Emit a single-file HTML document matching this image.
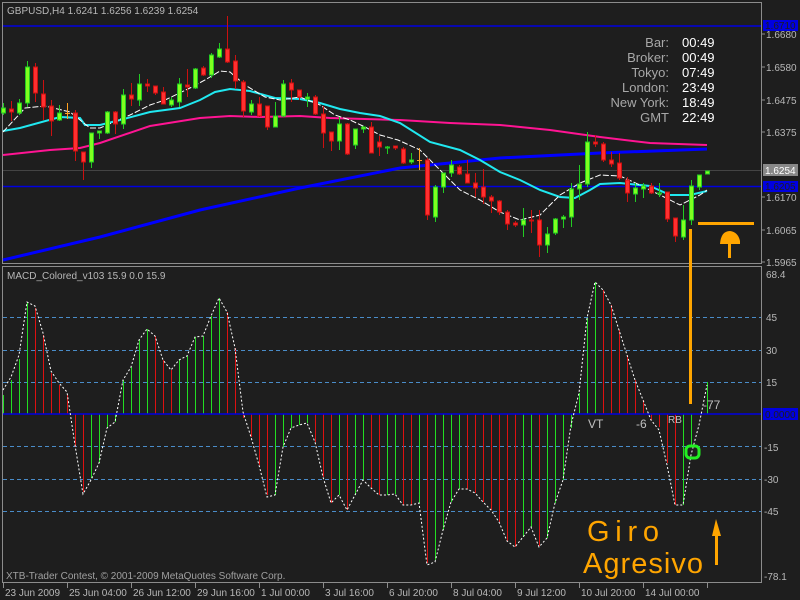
<!DOCTYPE html>
<html><head><meta charset="utf-8"><style>
html,body{margin:0;padding:0;background:#1e1e1e;}
svg{display:block;font-family:"Liberation Sans",sans-serif;}
</style></head><body>
<svg width="800" height="600" viewBox="0 0 800 600" xmlns="http://www.w3.org/2000/svg">
<rect width="800" height="600" fill="#1e1e1e"/>
<!-- frames -->
<g fill="none" stroke="#8c8c8c" stroke-width="1">
<path d="M2.5 2.5H761.5V263.5H2.5Z"/>
<path d="M2.5 266.5H761.5V582.5H2.5Z"/>
</g>
<!-- horizontal lines -->
<line x1="3" y1="26" x2="761" y2="26" stroke="#0000e0" stroke-width="1.5"/>
<line x1="3" y1="186.5" x2="761" y2="186.5" stroke="#0000e0" stroke-width="1.5"/>
<line x1="3" y1="170.5" x2="761" y2="170.5" stroke="#444" stroke-width="1"/>
<!-- blue trend -->
<polyline fill="none" stroke="#0000ff" stroke-width="3" points="3,260 100,237 200,210 300,188 400,168 500,158 600,153 707,149"/>
<!-- magenta MA -->
<polyline fill="none" stroke="#ff1493" stroke-width="2" points="3,155 50,150 80,148 100,143 150,126 200,118 230,116 260,117 300,116 330,118 400,120 450,123 500,125 550,130 600,137 650,143 707,145"/>
<!-- cyan MA -->
<polyline fill="none" stroke="#20e8f0" stroke-width="2" points="3,131 20,128 60,117 80,118 85,125 100,125 120,120 150,112 180,108 200,100 215,92 230,89 250,91 275,98 300,99 320,103 340,109 360,113 380,116 400,123 430,142 460,150 480,160 500,172 520,180 540,190 560,197 575,198 590,190 600,184 620,183 650,186 670,195 690,195 707,191"/>
<!-- white MA -->
<polyline fill="none" stroke="#fff" stroke-width="1" stroke-dasharray="6,2" points="3,132 25,108 45,106 70,112 90,128 100,128 130,115 150,105 165,100 190,88 205,80 220,71 230,72 245,85 265,97 280,100 300,97 320,105 335,115 350,120 365,127 380,135 398,140 420,150 440,170 460,190 480,200 500,212 520,220 540,215 560,195 580,183 600,175 620,176 640,185 660,195 680,205 700,195 707,190"/>
<!-- candles -->
<g id="c" stroke-width="1"></g>
<g stroke-width="1">
<g stroke="#22cc22" fill="#80ff20">
<line x1="3.5" y1="103" x2="3.5" y2="115"/><rect x="1.5" y="108" width="4" height="5"/>
<line x1="19.5" y1="99" x2="19.5" y2="115"/><rect x="17.5" y="103" width="4" height="10"/>
<line x1="27.5" y1="61" x2="27.5" y2="107"/><rect x="25.5" y="67" width="4" height="36"/>
<line x1="59.5" y1="105" x2="59.5" y2="121"/><rect x="57.5" y="113" width="4" height="7"/>
<line x1="91.5" y1="133" x2="91.5" y2="168"/><rect x="89.5" y="133" width="4" height="29"/>
<line x1="99.5" y1="131" x2="99.5" y2="139"/><rect x="97.5" y="131" width="4" height="2"/>
<line x1="107.5" y1="111" x2="107.5" y2="134"/><rect x="105.5" y="112" width="4" height="21"/>
<line x1="123.5" y1="89" x2="123.5" y2="129"/><rect x="121.5" y="95" width="4" height="29"/>
<line x1="139.5" y1="74" x2="139.5" y2="106"/><rect x="137.5" y="84" width="4" height="16"/>
<line x1="171.5" y1="97" x2="171.5" y2="107"/><rect x="169.5" y="100" width="4" height="5"/>
<line x1="179.5" y1="78" x2="179.5" y2="107"/><rect x="177.5" y="84" width="4" height="18"/>
<line x1="195.5" y1="68" x2="195.5" y2="89"/><rect x="193.5" y="69" width="4" height="19"/>
<line x1="211.5" y1="53" x2="211.5" y2="78"/><rect x="209.5" y="55" width="4" height="20"/>
<line x1="219.5" y1="43" x2="219.5" y2="58"/><rect x="217.5" y="49" width="4" height="8"/>
<line x1="251.5" y1="100" x2="251.5" y2="115"/><rect x="249.5" y="104" width="4" height="8"/>
<line x1="275.5" y1="102" x2="275.5" y2="127"/><rect x="273.5" y="116" width="4" height="11"/>
<line x1="283.5" y1="80" x2="283.5" y2="117"/><rect x="281.5" y="84" width="4" height="32"/>
<line x1="307.5" y1="93" x2="307.5" y2="107"/><rect x="305.5" y="97" width="4" height="2"/>
<line x1="339.5" y1="117" x2="339.5" y2="150"/><rect x="337.5" y="124" width="4" height="17"/>
<line x1="355.5" y1="129" x2="355.5" y2="149"/><rect x="353.5" y="129" width="4" height="16"/>
<line x1="363.5" y1="126" x2="363.5" y2="133"/><rect x="361.5" y="127" width="4" height="2"/>
<line x1="387.5" y1="146" x2="387.5" y2="154"/><rect x="385.5" y="147" width="4" height="1"/>
<line x1="411.5" y1="153" x2="411.5" y2="164"/><rect x="409.5" y="160" width="4" height="2"/>
<line x1="435.5" y1="185" x2="435.5" y2="222"/><rect x="433.5" y="187" width="4" height="30"/>
<line x1="443.5" y1="173" x2="443.5" y2="193"/><rect x="441.5" y="173" width="4" height="14"/>
<line x1="451.5" y1="160" x2="451.5" y2="177"/><rect x="449.5" y="165" width="4" height="8"/>
<line x1="523.5" y1="208" x2="523.5" y2="237"/><rect x="521.5" y="220" width="4" height="5"/>
<line x1="547.5" y1="227" x2="547.5" y2="253"/><rect x="545.5" y="234" width="4" height="11"/>
<line x1="555.5" y1="218" x2="555.5" y2="235"/><rect x="553.5" y="219" width="4" height="14"/>
<line x1="563.5" y1="215" x2="563.5" y2="228"/><rect x="561.5" y="217" width="4" height="2"/>
<line x1="571.5" y1="183" x2="571.5" y2="227"/><rect x="569.5" y="189" width="4" height="28"/>
<line x1="579.5" y1="165" x2="579.5" y2="200"/><rect x="577.5" y="184" width="4" height="5"/>
<line x1="587.5" y1="132" x2="587.5" y2="187"/><rect x="585.5" y="142" width="4" height="42"/>
<line x1="635.5" y1="183" x2="635.5" y2="202"/><rect x="633.5" y="188" width="4" height="6"/>
<line x1="643.5" y1="183" x2="643.5" y2="198"/><rect x="641.5" y="186" width="4" height="3"/>
<line x1="659.5" y1="183" x2="659.5" y2="197"/><rect x="657.5" y="193" width="4" height="1"/>
<line x1="683.5" y1="205" x2="683.5" y2="240"/><rect x="681.5" y="220" width="4" height="17"/>
<line x1="691.5" y1="180" x2="691.5" y2="225"/><rect x="689.5" y="186" width="4" height="34"/>
<line x1="699.5" y1="175" x2="699.5" y2="190"/><rect x="697.5" y="175" width="4" height="12"/>
<line x1="707.5" y1="171" x2="707.5" y2="174"/><rect x="705.5" y="171" width="4" height="3"/>
</g>
<g stroke="#cc1010" fill="#ff3030">
<line x1="11.5" y1="101" x2="11.5" y2="121"/><rect x="9.5" y="109" width="4" height="3"/>
<line x1="35.5" y1="63" x2="35.5" y2="102"/><rect x="33.5" y="67" width="4" height="26"/>
<line x1="43.5" y1="80" x2="43.5" y2="120"/><rect x="41.5" y="94" width="4" height="13"/>
<line x1="51.5" y1="100" x2="51.5" y2="136"/><rect x="49.5" y="106" width="4" height="15"/>
<line x1="75.5" y1="110" x2="75.5" y2="161"/><rect x="73.5" y="113" width="4" height="38"/>
<line x1="83.5" y1="152" x2="83.5" y2="180"/><rect x="81.5" y="152" width="4" height="10"/>
<line x1="115.5" y1="111" x2="115.5" y2="134"/><rect x="113.5" y="112" width="4" height="12"/>
<line x1="131.5" y1="83" x2="131.5" y2="106"/><rect x="129.5" y="95" width="4" height="4"/>
<line x1="147.5" y1="79" x2="147.5" y2="92"/><rect x="145.5" y="84" width="4" height="2"/>
<line x1="155.5" y1="86" x2="155.5" y2="95"/><rect x="153.5" y="86" width="4" height="7"/>
<line x1="163.5" y1="87" x2="163.5" y2="104"/><rect x="161.5" y="92" width="4" height="12"/>
<line x1="187.5" y1="69" x2="187.5" y2="97"/><rect x="185.5" y="85" width="4" height="2"/>
<line x1="203.5" y1="66" x2="203.5" y2="76"/><rect x="201.5" y="68" width="4" height="7"/>
<line x1="227.5" y1="16" x2="227.5" y2="63"/><rect x="225.5" y="49" width="4" height="13"/>
<line x1="235.5" y1="55" x2="235.5" y2="89"/><rect x="233.5" y="61" width="4" height="20"/>
<line x1="243.5" y1="80" x2="243.5" y2="117"/><rect x="241.5" y="82" width="4" height="29"/>
<line x1="259.5" y1="97" x2="259.5" y2="117"/><rect x="257.5" y="104" width="4" height="12"/>
<line x1="267.5" y1="106" x2="267.5" y2="130"/><rect x="265.5" y="106" width="4" height="21"/>
<line x1="291.5" y1="79" x2="291.5" y2="102"/><rect x="289.5" y="83" width="4" height="7"/>
<line x1="299.5" y1="90" x2="299.5" y2="100"/><rect x="297.5" y="90" width="4" height="7"/>
<line x1="315.5" y1="95" x2="315.5" y2="115"/><rect x="313.5" y="97" width="4" height="17"/>
<line x1="323.5" y1="106" x2="323.5" y2="148"/><rect x="321.5" y="114" width="4" height="19"/>
<line x1="331.5" y1="132" x2="331.5" y2="151"/><rect x="329.5" y="132" width="4" height="9"/>
<line x1="347.5" y1="123" x2="347.5" y2="155"/><rect x="345.5" y="124" width="4" height="30"/>
<line x1="371.5" y1="122" x2="371.5" y2="153"/><rect x="369.5" y="127" width="4" height="26"/>
<line x1="379.5" y1="136" x2="379.5" y2="156"/><rect x="377.5" y="142" width="4" height="5"/>
<line x1="395.5" y1="146" x2="395.5" y2="150"/><rect x="393.5" y="146" width="4" height="2"/>
<line x1="403.5" y1="147" x2="403.5" y2="164"/><rect x="401.5" y="149" width="4" height="14"/>
<line x1="427.5" y1="158" x2="427.5" y2="220"/><rect x="425.5" y="160" width="4" height="55"/>
<line x1="459.5" y1="165" x2="459.5" y2="175"/><rect x="457.5" y="167" width="4" height="7"/>
<line x1="467.5" y1="160" x2="467.5" y2="183"/><rect x="465.5" y="174" width="4" height="9"/>
<line x1="475.5" y1="173" x2="475.5" y2="197"/><rect x="473.5" y="183" width="4" height="5"/>
<line x1="483.5" y1="169" x2="483.5" y2="204"/><rect x="481.5" y="187" width="4" height="10"/>
<line x1="491.5" y1="195" x2="491.5" y2="213"/><rect x="489.5" y="197" width="4" height="4"/>
<line x1="499.5" y1="200" x2="499.5" y2="215"/><rect x="497.5" y="201" width="4" height="11"/>
<line x1="507.5" y1="210" x2="507.5" y2="230"/><rect x="505.5" y="212" width="4" height="12"/>
<line x1="515.5" y1="221" x2="515.5" y2="227"/><rect x="513.5" y="223" width="4" height="2"/>
<line x1="531.5" y1="210" x2="531.5" y2="233"/><rect x="529.5" y="220" width="4" height="1"/>
<line x1="539.5" y1="210" x2="539.5" y2="257"/><rect x="537.5" y="220" width="4" height="25"/>
<line x1="595.5" y1="135" x2="595.5" y2="147"/><rect x="593.5" y="142" width="4" height="2"/>
<line x1="603.5" y1="142" x2="603.5" y2="162"/><rect x="601.5" y="144" width="4" height="16"/>
<line x1="611.5" y1="152" x2="611.5" y2="167"/><rect x="609.5" y="160" width="4" height="4"/>
<line x1="619.5" y1="153" x2="619.5" y2="180"/><rect x="617.5" y="163" width="4" height="15"/>
<line x1="627.5" y1="177" x2="627.5" y2="202"/><rect x="625.5" y="180" width="4" height="13"/>
<line x1="651.5" y1="183" x2="651.5" y2="194"/><rect x="649.5" y="186" width="4" height="7"/>
<line x1="667.5" y1="192" x2="667.5" y2="222"/><rect x="665.5" y="192" width="4" height="27"/>
<line x1="675.5" y1="218" x2="675.5" y2="242"/><rect x="673.5" y="218" width="4" height="18"/>
</g>
<g stroke="#ffa020">
<line x1="67.5" y1="103" x2="67.5" y2="119"/><line x1="65" y1="113.5" x2="70" y2="113.5"/>
<line x1="419.5" y1="148" x2="419.5" y2="170"/><line x1="417" y1="160.5" x2="422" y2="160.5"/>
</g>
</g>
<!-- info -->
<g font-size="13" fill="#a8a8a8" text-anchor="end">
<text x="669" y="47">Bar:</text><text x="669" y="62">Broker:</text><text x="669" y="77">Tokyo:</text>
<text x="669" y="92">London:</text><text x="669" y="107">New York:</text><text x="669" y="122">GMT</text>
</g>
<g font-size="13" fill="#fff">
<text x="682" y="47">00:49</text><text x="682" y="62">00:49</text><text x="682" y="77">07:49</text>
<text x="682" y="92">23:49</text><text x="682" y="107">18:49</text><text x="682" y="122">22:49</text>
</g>
<text x="7" y="14" font-size="10" fill="#b8b8b8">GBPUSD,H4  1.6241 1.6256 1.6239 1.6254</text>
<!-- price axis -->
<g font-size="10" fill="#b8b8b8">
<text x="766" y="38">1.6680</text><text x="766" y="71">1.6580</text><text x="766" y="104">1.6475</text>
<text x="766" y="136">1.6375</text><text x="766" y="201">1.6170</text>
<text x="766" y="234">1.6065</text><text x="766" y="266">1.5965</text>
</g>
<g stroke="#8c8c8c"><line x1="761" y1="34" x2="765" y2="34"/><line x1="761" y1="67" x2="765" y2="67"/><line x1="761" y1="100" x2="765" y2="100"/><line x1="761" y1="132" x2="765" y2="132"/><line x1="761" y1="197" x2="765" y2="197"/><line x1="761" y1="230" x2="765" y2="230"/><line x1="761" y1="262" x2="765" y2="262"/></g>
<rect x="763" y="20" width="35" height="11" fill="#0000e0"/><text x="765" y="29" font-size="10" fill="#1e1e1e">1.6710</text>
<rect x="763" y="164" width="35" height="12" fill="#888"/><text x="765" y="174" font-size="10" fill="#fff">1.6254</text>
<rect x="763" y="181" width="35" height="11" fill="#0000e0"/><text x="765" y="190" font-size="10" fill="#1e1e1e">1.6205</text>
<!-- MACD panel -->
<text x="7" y="279" font-size="10" fill="#b8b8b8">MACD_Colored_v103 15.9 0.0 15.9</text>
<g stroke="#4a8cc8" stroke-width="1" stroke-dasharray="4,3">
<line x1="3" y1="317.5" x2="761" y2="317.5"/><line x1="3" y1="350.5" x2="761" y2="350.5"/>
<line x1="3" y1="382.5" x2="761" y2="382.5"/><line x1="3" y1="446.5" x2="761" y2="446.5"/>
<line x1="3" y1="479.5" x2="761" y2="479.5"/><line x1="3" y1="511.5" x2="761" y2="511.5"/>
</g>
<g stroke="#22dd22" stroke-width="1">
<path d="M3.5 414V395M11.5 414V380M19.5 414V359M27.5 414V302M91.5 414V478M99.5 414V463M107.5 414V428M115.5 414V422M123.5 414V380M131.5 414V367M139.5 414V340M147.5 414V329M179.5 414V360M187.5 414V356M195.5 414V337M203.5 414V336M211.5 414V316M219.5 414V298M275.5 414V495M283.5 414V447M291.5 414V428M299.5 414V425M307.5 414V423M339.5 414V495M355.5 414V495M363.5 414V480M387.5 414V495M395.5 414V494M419.5 414V503M435.5 414V560M443.5 414V530M451.5 414V502M459.5 414V489M523.5 414V537M531.5 414V527M547.5 414V538M555.5 414V503M563.5 414V480M571.5 414V428M579.5 414V393M587.5 414V318M595.5 414V282M683.5 414V505M691.5 414V447M707.5 414V382"/>
</g>
<g stroke="#dd1111" stroke-width="1">
<path d="M35.5 414V308M43.5 414V335M51.5 414V373M59.5 414V385M67.5 414V395M75.5 414V447M83.5 414V492M155.5 414V336M163.5 414V360M171.5 414V370M227.5 414V312M235.5 414V348M243.5 414V418M251.5 414V437M259.5 414V465M267.5 414V495M315.5 414V442M323.5 414V477M331.5 414V503M347.5 414V510M371.5 414V488M379.5 414V495M403.5 414V505M411.5 414V505M427.5 414V563M467.5 414V489M475.5 414V493M483.5 414V502M491.5 414V510M499.5 414V522M507.5 414V541M515.5 414V547M539.5 414V546M603.5 414V290M611.5 414V305M619.5 414V330M627.5 414V355M635.5 414V380M643.5 414V400M651.5 414V420M659.5 414V427M667.5 414V463M675.5 414V505"/>
</g>
<line x1="3" y1="414" x2="761" y2="414" stroke="#0000e0" stroke-width="1.5"/>
<polyline fill="none" stroke="#fff" stroke-width="1" stroke-dasharray="2,2" points="3,390 11,377 19,355 27,302 35,306 43,333 51,371 59,383 67,392 75,445 83,494 91,480 99,463 107,428 115,422 123,380 131,367 139,340 147,329 155,336 163,360 171,370 179,360 187,356 195,337 203,336 211,316 219,298 227,312 235,348 243,412 251,437 259,465 267,497 275,495 283,447 291,428 299,425 307,423 315,442 323,477 331,503 339,495 347,510 355,495 363,480 371,488 379,495 387,495 395,494 403,505 411,505 419,503 427,565 435,562 443,530 451,502 459,489 467,489 475,493 483,502 491,510 499,522 507,541 515,547 523,537 531,527 539,547 547,538 555,503 563,480 571,425 579,393 587,318 595,282 603,290 611,305 619,330 627,355 635,380 643,400 651,420 659,430 667,465 675,505 683,505 691,455 699,425 707,385"/>
<g font-size="12" fill="#c0c0c0"><text x="588" y="428">VT</text><text x="636" y="428">-6</text><text x="703" y="409">-77</text></g>
<text x="668" y="423" font-size="10" fill="#c0c0c0">RB</text>
<!-- MACD axis -->
<g font-size="10" fill="#b8b8b8">
<text x="766" y="278">68.4</text><text x="766" y="321">45</text><text x="766" y="354">30</text><text x="766" y="386">15</text>
<text x="764" y="451">-15</text><text x="764" y="483">-30</text><text x="764" y="515">-45</text><text x="764" y="580">-78.1</text>
</g>
<rect x="763" y="408" width="35" height="12" fill="#0000e0"/><text x="765" y="418" font-size="10" fill="#1e1e1e">0.0000</text>
<text x="6" y="579" font-size="10" fill="#a0a0a0">XTB-Trader Contest, © 2001-2009 MetaQuotes Software Corp.</text>
<!-- time axis -->
<g stroke="#8c8c8c"><path d="M3.5 583V588M67.5 583V588M131.5 583V588M195.5 583V588M259.5 583V588M323.5 583V588M387.5 583V588M451.5 583V588M515.5 583V588M579.5 583V588M643.5 583V588M707.5 583V588"/></g>
<g font-size="10" fill="#b8b8b8">
<text x="5" y="596">23 Jun 2009</text><text x="69" y="596">25 Jun 04:00</text><text x="133" y="596">26 Jun 12:00</text>
<text x="197" y="596">29 Jun 16:00</text><text x="261" y="596">1 Jul 00:00</text><text x="325" y="596">3 Jul 16:00</text>
<text x="389" y="596">6 Jul 20:00</text><text x="453" y="596">8 Jul 04:00</text><text x="517" y="596">9 Jul 12:00</text>
<text x="581" y="596">10 Jul 20:00</text><text x="645" y="596">14 Jul 00:00</text>
</g>
<!-- annotations -->
<g fill="#ffa500" stroke="none">
<rect x="689" y="229" width="3" height="175"/>
<rect x="698" y="222" width="56" height="3"/>
<path d="M720 244 Q721 231 730 231 Q738 232 740 241 L740 244 Z"/>
<rect x="728" y="243" width="3" height="15"/>
<path d="M716 519 L712 536 L721 536 Z"/>
<rect x="715" y="530" width="3" height="35"/>
</g>
<rect x="686" y="446" width="13" height="12" rx="4" fill="none" stroke="#22ee22" stroke-width="3"/>
<g font-size="29" fill="#ffa500" font-family="'Liberation Sans',sans-serif">
<text x="587" y="541" textLength="72">Giro</text>
<text x="583" y="573" textLength="120">Agresivo</text>
</g>
</svg>
</body></html>
